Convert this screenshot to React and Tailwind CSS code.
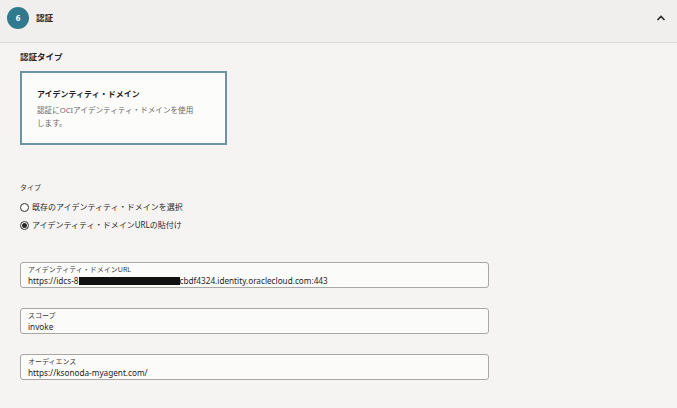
import React from 'react';

const font = { fontFamily: '"Noto Sans", "Noto Sans CJK JP", sans-serif' };

const Field = ({ label, children }) => (
  <div className="w-[469px] h-[26px] rounded-[3px] border border-[#a9a7a4] bg-[#fbfbfa] px-[7px] pt-[2px]">
    <div className="text-[7px] leading-[10px] text-[#3d3b39]">{label}</div>
    <div className="text-[8.2px] leading-[11px] text-[#1e1d1c] flex items-center whitespace-nowrap">{children}</div>
  </div>
);

const Radio = ({ checked, label }) => (
  <div className="flex items-center h-[18px]">
    <span className="w-[9px] h-[9px] rounded-full border border-[#2f2e2d] bg-white flex items-center justify-center">
      {checked && <span className="w-[5px] h-[5px] rounded-full bg-[#2a2928]" />}
    </span>
    <span className="ml-[3px] text-[8px] text-[#2a2928]">{label}</span>
  </div>
);

export default function App() {
  return (
    <div className="w-[677px] h-[408px] bg-[#f5f4f2] overflow-hidden" style={font}>
      <div className="h-[43px] bg-[#f0efed] border-b border-[#dcdad7] flex items-start">
        <div className="ml-[7px] mt-[7px] w-[22px] h-[22px] rounded-full bg-[#2f7a8d] flex items-center justify-center text-white text-[8px] font-bold">
          6
        </div>
        <div className="ml-[7px] mt-[11px] text-[8.5px] leading-[14px] font-bold text-[#242322]">認証</div>
        <div className="ml-auto mr-[11px] mt-[14px]">
          <svg width="10" height="8" viewBox="0 0 10 8">
            <path d="M1.5 6 L5 2.5 L8.5 6" fill="none" stroke="#2a2928" strokeWidth="1.6" />
          </svg>
        </div>
      </div>

      <div className="pl-[20px]">
        <div className="mt-[8px] text-[8.5px] leading-[12px] font-bold text-[#242322]">認証タイプ</div>
        <div className="mt-[8px] w-[207px] h-[74px] border-2 border-[#6a95a6] bg-[#fcfcfb] px-[15px] pt-[15px]">
          <div className="text-[8px] leading-[12px] font-bold text-[#1f1e1d]">アイデンティティ・ドメイン</div>
          <div className="mt-[4px] text-[7.6px] leading-[13px] text-[#6a6866]">
            認証にOCIアイデンティティ・ドメインを使用
            <br />
            します。
          </div>
        </div>

        <div className="mt-[38px] text-[7px] leading-[10px] text-[#3d3b39]">タイプ</div>
        <div className="mt-[5px]">
          <Radio label="既存のアイデンティティ・ドメインを選択" />
          <Radio checked label="アイデンティティ・ドメインURLの貼付け" />
        </div>

        <div className="mt-[28px] flex flex-col gap-[20px]">
          <Field label="アイデンティティ・ドメインURL">
            <span>https://idcs-8</span>
            <span className="inline-block w-[101px] h-[8px] bg-[#111111]" />
            <span>cbdf4324.identity.oraclecloud.com:443</span>
          </Field>
          <Field label="スコープ">
            <span>invoke</span>
          </Field>
          <Field label="オーディエンス">
            <span>https://ksonoda-myagent.com/</span>
          </Field>
        </div>
      </div>
    </div>
  );
}
